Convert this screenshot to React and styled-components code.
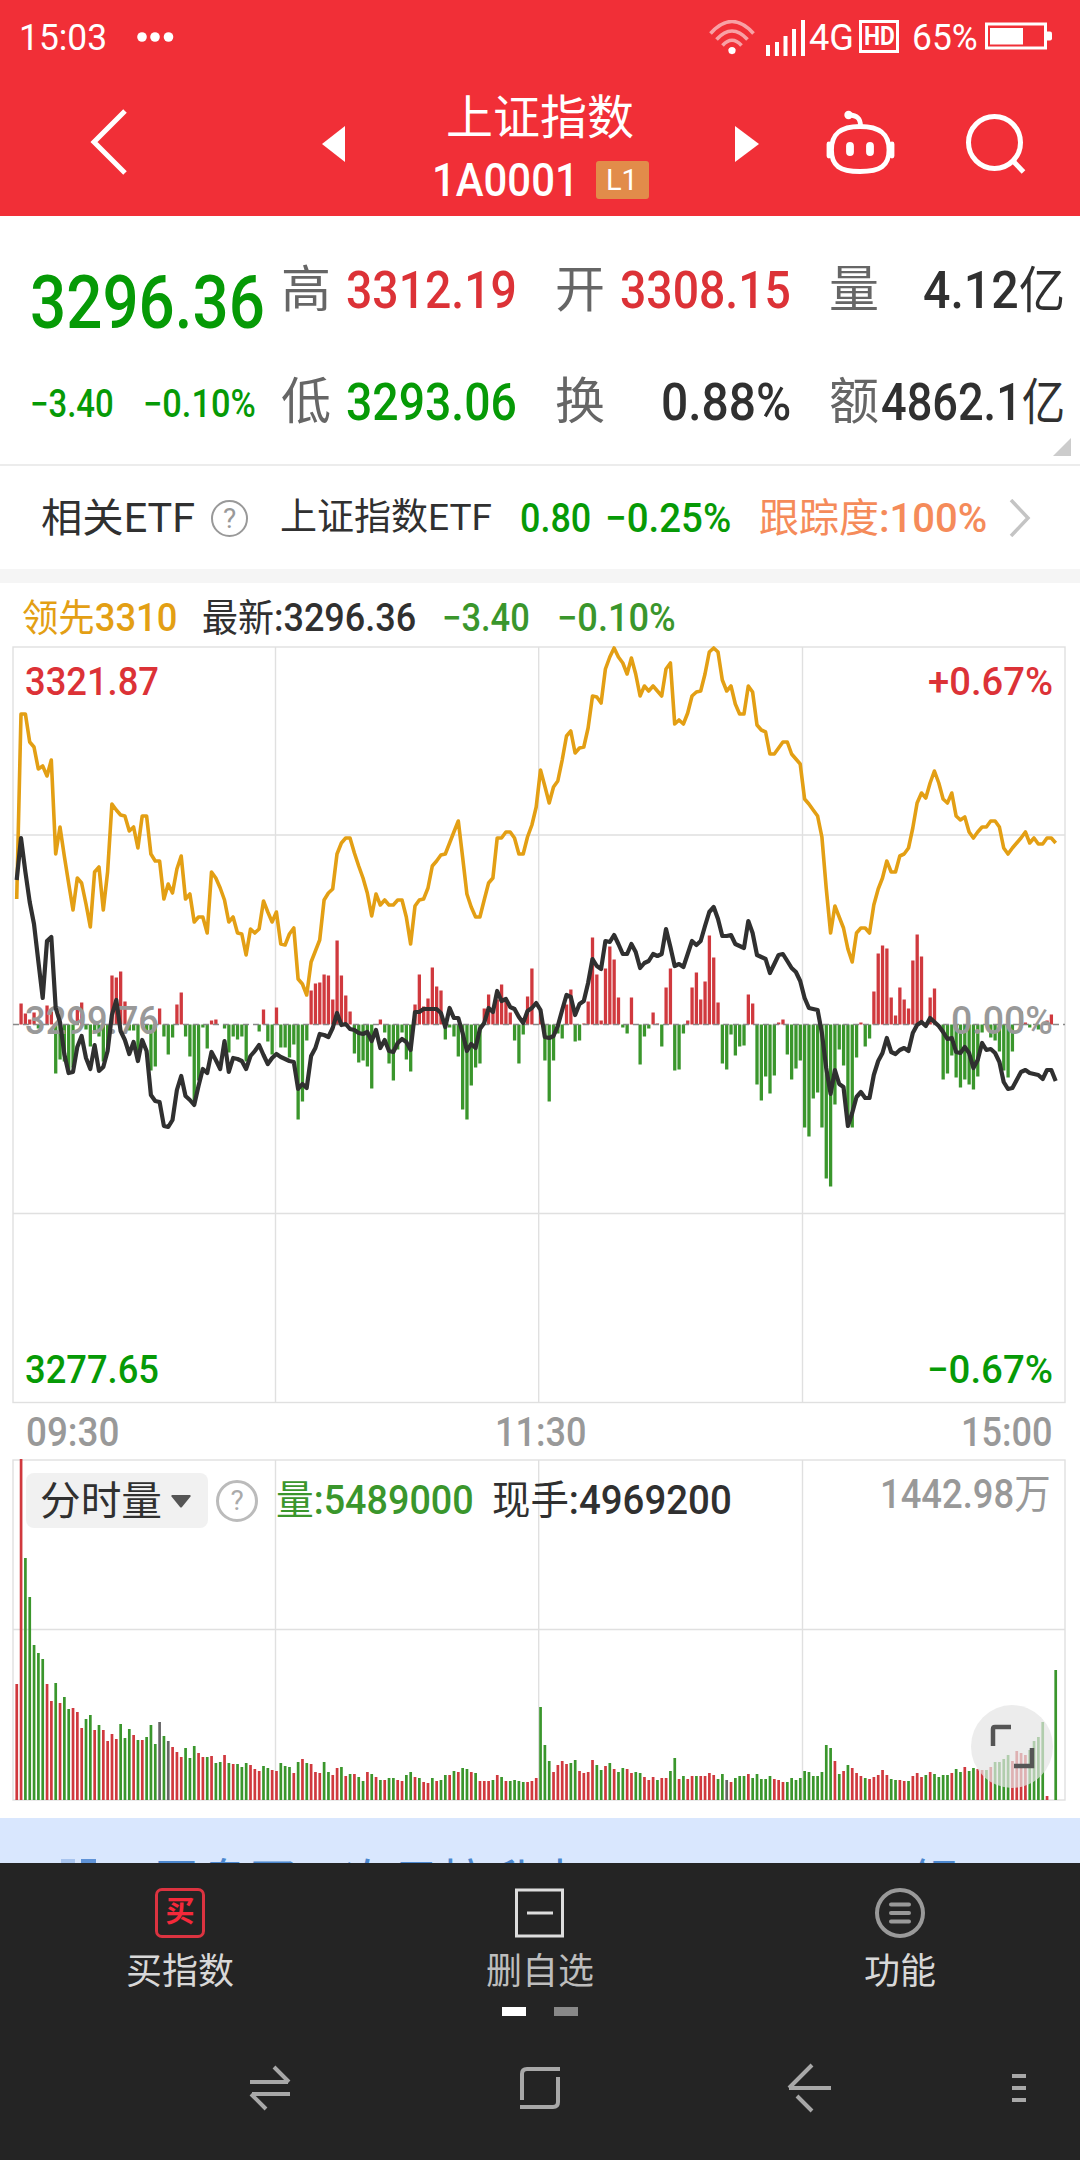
// src/App.jsx
import React, { useLayoutEffect, useRef, useState } from 'react';
import styled, { createGlobalStyle } from 'styled-components';

const RED = '#dc3237';
const GREEN = '#069a06';
const LINE_GREEN = '#3a962c';
const ORANGE = '#e39f14';
const DARK = '#303030';
const GREY = '#999';
const GRID = '#e0e0e0';

// One value per trading minute, in chart units
const leadLine = [
    899, 714, 714, 742, 747, 769, 766, 776, 760, 854, 827, 856, 883, 910, 878, 883, 904, 927, 872, 867,
    910, 872, 804, 810, 815, 816, 831, 827, 848, 816, 816, 854, 861, 861, 899, 884, 893, 869, 856, 899,
    894, 922, 917, 917, 933, 872, 878, 888, 900, 922, 917, 933, 934, 955, 929, 933, 929, 901, 912, 922,
    912, 944, 945, 934, 928, 979, 984, 995, 962, 951, 940, 900, 893, 889, 854, 843, 838, 838, 853, 866,
    878, 893, 916, 894, 905, 900, 905, 905, 900, 900, 917, 944, 906, 900, 899, 888, 866, 861, 855, 854,
    843, 832, 821, 857, 894, 907, 917, 917, 900, 883, 878, 838, 838, 832, 832, 838, 854, 854, 837, 825,
    807, 770, 786, 803, 787, 781, 760, 736, 731, 753, 748, 747, 728, 696, 697, 703, 669, 657, 648, 657,
    663, 674, 658, 674, 696, 686, 691, 686, 691, 696, 669, 663, 724, 720, 724, 713, 696, 692, 691, 674,
    652, 648, 652, 680, 691, 686, 704, 714, 714, 686, 692, 725, 730, 732, 754, 754, 748, 742, 742, 754,
    759, 764, 799, 804, 810, 816, 837, 888, 933, 906, 917, 928, 949, 962, 933, 928, 928, 933, 905, 889,
    878, 861, 872, 872, 856, 854, 848, 828, 803, 793, 798, 783, 771, 783, 799, 803, 793, 816, 820, 817,
    832, 838, 832, 827, 827, 821, 821, 827, 848, 854, 848, 843, 838, 832, 843, 838, 844, 844, 838, 838,
    843,
];

const indexLine = [
    880, 838, 872, 902, 924, 961, 998, 941, 937, 1008, 1022, 1054, 1073, 1072, 1047, 1036, 1058, 1069, 1045, 1071,
    1067, 1051, 1015, 1000, 1031, 1040, 1054, 1042, 1061, 1040, 1051, 1095, 1101, 1102, 1126, 1127, 1120, 1090, 1076, 1096,
    1100, 1105, 1086, 1069, 1073, 1052, 1060, 1069, 1041, 1072, 1058, 1059, 1061, 1069, 1056, 1051, 1045, 1055, 1064, 1058,
    1054, 1057, 1059, 1061, 1062, 1089, 1084, 1088, 1056, 1048, 1034, 1035, 1037, 1028, 1013, 1025, 1024, 1029, 1030, 1033,
    1034, 1032, 1041, 1030, 1048, 1040, 1051, 1052, 1043, 1039, 1042, 1050, 1012, 1012, 1009, 1009, 1009, 1009, 1013, 1027,
    1008, 1018, 1018, 1033, 1051, 1044, 1048, 1029, 1023, 1008, 1012, 991, 1001, 999, 1007, 1009, 1017, 1023, 1011, 1008,
    1003, 1010, 1037, 1038, 1036, 1026, 1010, 995, 997, 1015, 1004, 1001, 983, 959, 966, 969, 941, 942, 935, 944,
    954, 954, 944, 952, 968, 963, 961, 954, 956, 954, 929, 947, 966, 964, 967, 954, 941, 945, 941, 926,
    912, 907, 919, 936, 936, 935, 944, 946, 948, 921, 933, 955, 957, 959, 973, 964, 955, 954, 961, 968,
    972, 981, 998, 1008, 1009, 1010, 1033, 1068, 1094, 1070, 1084, 1087, 1126, 1113, 1097, 1092, 1098, 1098, 1075, 1061,
    1053, 1038, 1052, 1054, 1050, 1048, 1051, 1033, 1025, 1022, 1026, 1018, 1022, 1026, 1032, 1039, 1038, 1052, 1053, 1047,
    1053, 1068, 1060, 1043, 1050, 1049, 1053, 1062, 1082, 1089, 1088, 1080, 1072, 1070, 1073, 1074, 1075, 1079, 1070, 1070,
    1081,
];

// Above zero is drawn red, below zero green
const momentum = [
    0, 21, 11, 5, 12, -4, 0, 19, 13, -49, -35, -37, -46, -43, 15, 22, -5, -22, -8, -12,
    -37, -22, 49, 47, 53, 23, -6, -6, -33, 7, -8, -46, -42, 16, -12, -30, -13, 20, 32, -12,
    -32, -78, -56, -3, -24, 4, 5, 0, -4, -28, -12, -15, -12, -37, 0, 0, -7, 15, -17, -30,
    17, -23, -23, -33, -20, -95, -77, -16, 34, 41, 42, 50, 49, 25, 84, 49, 29, 13, -29, -38,
    -36, -42, -64, 0, 5, -8, -39, -56, -25, -8, -35, -47, 20, 50, 18, 26, 57, 38, 34, -15,
    -3, -12, -32, -85, -95, -61, -43, -39, 16, 30, 16, 25, 40, 25, 12, -16, -39, -10, 28, 56,
    0, 11, -36, -77, -36, -9, -14, 20, 35, -17, -16, 1, 23, 87, 50, 4, 56, 78, 65, 27,
    -3, -9, 27, 0, -40, -12, -4, 12, 1, -22, 37, 56, -46, -45, -9, 4, 37, 52, 25, 43,
    89, 67, 22, -39, -45, -10, -31, -22, -21, 30, 21, -60, -76, -52, -69, -51, 2, 5, -30, -55,
    -44, -36, -103, -112, -74, -68, -103, -154, -162, -80, -25, -41, -101, -103, -33, 2, -22, -14, 33, 71,
    79, 76, 27, 9, 37, 25, 16, 64, 90, 68, 0, 27, 36, 0, -55, -49, -31, -53, -63, -55,
    -60, -65, -52, -8, 0, -13, -16, -27, -46, -53, -27, 0, 13, 2, -3, 0, -5, 0, 4, 10,
    0,
];

// r = up, g = down, n = unchanged
const volume = `
r116 r341 g242 g203 g155 g147 g141 r116 r99 g117 r97 g103 g91 r92 r88 r72 g81 g85 r70 g75
r70 r59 r66 r61 g76 g62 g71 r65 g60 r60 g63 g75 g56 n78 g64 n59 r53 r48 r43 g52
g42 g54 r47 r43 g43 r44 g37 g38 r45 g37 r36 g36 g33 g37 r35 r31 r29 g34 g32 r30
r29 g37 g34 g33 r27 g38 r41 g37 r36 r28 r27 g38 g28 r25 r32 g33 r24 g26 r26 g23
g19 r28 g26 r23 g20 r20 g22 g22 r20 r19 g25 g28 r23 g22 r18 r17 g22 r19 g20 g25
r25 g29 r28 g32 g31 r28 g27 r19 r19 r19 g20 r25 g23 r19 g19 g20 g19 g18 r18 r19
r22 g93 g55 g39 r28 r35 r39 r36 g37 g40 r29 r27 r28 r40 g35 g30 r34 g37 r31 g28
g32 r31 r27 g28 g27 r23 r20 r23 g20 r22 r22 g29 g42 r21 g24 r21 r24 g24 r24 r24
r27 r25 g21 g26 n20 r18 g22 g24 g24 r26 g22 g26 g21 g21 g24 r21 r20 r18 g18 g22
g20 g22 g29 g28 g24 g24 g28 g55 g52 r39 g26 r29 g35 r32 r27 r24 g22 r21 r23 r25
r30 r25 g21 g20 r20 r19 g19 r24 r27 r23 g25 r28 g26 g23 g25 g25 r27 g31 g28 r33
g29 g32 r31 r30 g30 r33 g38 g38 g41 g45 r39 r49 r47 r45 g50 g59 g63 g78 r4 g0
g130
`.trim().split(/\s+/).map((t) => ({ kind: t[0], h: Number(t.slice(1)) }));

const volumeColors = { r: '#d0393e', g: LINE_GREEN, n: '#666' };
const minuteX = (i) => 16.7 + i * 4.329;
const toPoints = (values) => values.map((y, i) => `${minuteX(i).toFixed(1)},${y}`).join(' ');

const GlobalStyle = createGlobalStyle`
    * {
        box-sizing: border-box;
    }

    body {
        margin: 0;
        background: #fff;
        font-family: Roboto, "Noto Sans CJK SC", sans-serif;
        color: ${DARK};
    }

    svg {
        display: block;
        flex: none;
    }
`;

const Screen = styled.div`
    width: 1080px;
    height: 2160px;
    display: flex;
    flex-direction: column;
    overflow: hidden;
    background: #fff;
`;

/* Text squeezed to a fixed width, the way the condensed figures are set */
const FitBox = styled.span`
    display: inline-block;
    flex: none;
    width: ${(p) => p.$width}px;
    margin-left: ${(p) => p.$gap || 0}px;
    font-size: ${(p) => p.$size}px;
    font-weight: ${(p) => p.$weight || 500};
    line-height: 1.2;
    color: ${(p) => p.$color || 'inherit'};
    white-space: nowrap;
`;

const FitInner = styled.span`
    display: inline-block;
    transform-origin: 0 50%;
`;

function Fit({ width, size, weight, color, gap, children }) {
    const ref = useRef(null);
    const [scale, setScale] = useState(1);
    useLayoutEffect(() => {
        setScale(width / ref.current.offsetWidth);
    }, [width]);
    return (
        <FitBox $width={width} $size={size} $weight={weight} $color={color} $gap={gap}>
            <FitInner ref={ref} style={{ transform: `scaleX(${scale})` }}>{children}</FitInner>
        </FitBox>
    );
}

const Han = styled.span`
    font-weight: 400;
    font-size: ${(p) => (p.$size ? `${p.$size}px` : 'inherit')};
    line-height: 1;
`;

// Header
const Header = styled.header`
    height: 216px;
    flex: none;
    background: #f12f37;
    color: #fff;
`;

const StatusBar = styled.div`
    height: 76px;
    display: flex;
    align-items: center;
    justify-content: space-between;
    padding: 0 27px 0 19px;
`;

const StatusGroup = styled.div`
    display: flex;
    align-items: center;
`;

const WifiSvg = styled.svg`
    margin-right: 11px;
`;

const DotsSvg = styled.svg`
    margin-left: 28px;
`;

const BatterySvg = styled.svg`
    margin: -4px 0 0 7px;
`;

const HdBadge = styled.span`
    width: 40px;
    height: 33px;
    margin: -2px 0 0 5px;
    border: 3px solid #fff;
    display: flex;
    align-items: center;
    justify-content: center;
`;

const TitleBar = styled.div`
    height: 140px;
    display: grid;
    grid-template-columns: 322px 110px 216px 111px 68px 102px 151px;
`;

const TitleText = styled.div`
    display: flex;
    flex-direction: column;
    align-items: center;
    padding-top: 12px;
`;

const Name = styled.div`
    font-size: 47px;
    line-height: 60px;
    white-space: nowrap;
`;

const CodeRow = styled.div`
    height: 64px;
    display: flex;
    align-items: center;
`;

const LevelBadge = styled.span`
    width: 53px;
    height: 38px;
    margin-left: 17px;
    border-radius: 3px;
    background: #e28c4a;
    display: flex;
    align-items: center;
    justify-content: center;
`;

const BarIcon = styled.svg`
    width: ${(p) => p.$width}px;
    height: 140px;
    margin-left: ${(p) => p.$shift || 0}px;
    justify-self: ${(p) => p.$align || 'start'};
`;

// Quote
const Quote = styled.section`
    position: relative;
    height: 250px;
    flex: none;
    display: grid;
    grid-template-columns: 213px repeat(3, 236px);
    grid-template-rows: 112px 112px;
    column-gap: 38px;
    padding: 19px 0 0 30px;
    border-bottom: 2px solid #ececec;
`;

const LastPrice = styled.div`
    display: flex;
    align-items: center;
    padding-top: ${(p) => p.$drop}px;
`;

const Stat = styled.div`
    display: flex;
    align-items: center;
    justify-content: space-between;
`;

const StatLabel = styled.span`
    font-size: 50px;
    line-height: 60px;
    margin-top: -2px;
    color: #666;
`;

const Corner = styled.svg`
    position: absolute;
    right: 9px;
    bottom: 8px;
`;

// Related ETF and legend
const EtfRow = styled.section`
    height: 103px;
    flex: none;
    display: flex;
    align-items: center;
    padding: 2px 0 0 41px;
`;

const Chevron = styled.svg`
    margin: -2px 0 0 21px;
`;

const HelpIcon = styled.span`
    width: ${(p) => p.$d}px;
    height: ${(p) => p.$d}px;
    flex: none;
    margin-left: ${(p) => p.$gap}px;
    border: ${(p) => p.$line}px solid ${(p) => p.$color};
    border-radius: 50%;
    display: flex;
    align-items: center;
    justify-content: center;
    font-size: 28px;
    line-height: 1;
    color: ${(p) => p.$text};
`;

const Divider = styled.div`
    height: 14px;
    flex: none;
    background: #f5f5f5;
`;

const Legend = styled.div`
    height: 63px;
    flex: none;
    display: flex;
    align-items: center;
    padding: 8px 0 0 22px;
`;

const ChartSvg = styled.svg`
    width: 1080px;
    height: ${(p) => p.$height}px;
`;

const ChartText = styled.text`
    font-size: 39px;
    font-weight: 500;
    fill: ${(p) => p.$fill};
`;

const TimeAxis = styled.div`
    height: 55px;
    flex: none;
    display: flex;
    align-items: center;
    justify-content: space-between;
    padding: 2px 28px 0 26px;
`;

const VolumePane = styled.section`
    position: relative;
    height: 359px;
    flex: none;
`;

const VolumeBar = styled.div`
    position: absolute;
    top: 14px;
    left: 26px;
    right: 29px;
    height: 55px;
    display: flex;
    align-items: center;
`;

const VolumeSelect = styled.div`
    width: 182px;
    height: 55px;
    border-radius: 8px;
    background: #f1f1f1;
    display: flex;
    align-items: center;
    gap: 9px;
    padding: 2px 0 0 14px;
`;

const VolumeMax = styled.div`
    margin: -12px 0 0 auto;
`;

const Expand = styled.button`
    position: absolute;
    left: 971px;
    top: 246px;
    width: 82px;
    height: 83px;
    padding: 0;
    border: none;
    border-radius: 50%;
    background: rgba(228, 228, 228, 0.7);
`;

// Bottom
const Promo = styled.div`
    height: 45px;
    flex: none;
    overflow: hidden;
    background: #d9e7fe;
    display: flex;
    align-items: flex-start;
    padding: 38px 0 0 61px;
    color: #4b87cf;
    font-size: 48px;
    line-height: 54px;
    white-space: nowrap;
`;

const PromoMark = styled.span`
    width: ${(p) => p.$width}px;
    height: 20px;
    flex: none;
    margin: 3px 6px 0 0;
    background: ${(p) => p.$color};
`;

const PromoText = styled.span`
    margin-left: ${(p) => p.$gap}px;
`;

const Footer = styled.footer`
    flex: 1;
    background: #242424;
`;

const Tabs = styled.nav`
    display: grid;
    grid-template-columns: repeat(3, 360px);
    height: 144px;
`;

const Tab = styled.div`
    display: flex;
    flex-direction: column;
    align-items: center;
    padding-top: 25px;
    font-size: 36px;
    line-height: 44px;
    color: ${(p) => p.$color};

    svg, div {
        margin-bottom: 12px;
    }
`;

const BuyIcon = styled.div`
    width: 50px;
    height: 50px;
    border: 3px solid #dc3340;
    border-radius: 7px;
    color: #f5293a;
    font-size: 29px;
    font-weight: 700;
    line-height: 43px;
    text-align: center;
`;

const Pager = styled.div`
    display: flex;
    justify-content: center;
    gap: 28px;
    height: 9px;
`;

const PagerDot = styled.span`
    width: 24px;
    background: ${(p) => (p.$active ? '#fff' : '#888')};
`;

const SystemNav = styled.div`
    height: 144px;
    display: grid;
    grid-template-columns: 405px 270px 268px 152px;
    justify-items: center;
    align-items: center;
`;

const NavSvg = styled.svg`
    fill: none;
    stroke: #a8a8a8;
    stroke-width: 4;
    margin-left: ${(p) => p.$shift || 0}px;
`;

function WifiIcon() {
    return (
        <WifiSvg width="46" height="36" viewBox="0 0 46 36" fill="none" stroke="#fff" strokeWidth="3.6">
            <g opacity="0.55">
                <path d="M1.5 13.5Q23-10.5 44.5 13.5" />
                <path d="M7.5 19.5Q23 2.5 38.5 19.5" />
                <path d="M13.5 25.5Q23 15 32.5 25.5" />
            </g>
            <path d="M19.5 29.5Q23 26 26.5 29.5L23 34.5Z" fill="#fff" stroke="none" />
            <circle cx="23" cy="30.5" r="3.6" fill="#fff" stroke="none" />
        </WifiSvg>
    );
}

function StatusRow() {
    return (
        <StatusBar>
            <StatusGroup>
                <Fit width={88} size={37} weight={400}>15:03</Fit>
                <DotsSvg width="40" height="12" viewBox="0 0 40 12" fill="#fff">
                    <circle cx="7" cy="5" r="4.8" />
                    <circle cx="20" cy="5" r="4.8" />
                    <circle cx="33.5" cy="5" r="4.8" />
                </DotsSvg>
            </StatusGroup>
            <StatusGroup>
                <WifiIcon />
                <svg width="40" height="36" viewBox="0 0 40 36" fill="#fff">
                    <path d="M0 25h4v11h-4zM9 22h4v14h-4zM17.5 16h4v20h-4zM26 9h4v27h-4zM35 0h4v36h-4z" />
                </svg>
                <Fit width={45} size={37} weight={400} gap={3}>4G</Fit>
                <HdBadge><Fit width={31} size={25} weight={700}>HD</Fit></HdBadge>
                <Fit width={66} size={37} weight={400} gap={13}>65%</Fit>
                <BatterySvg width="68" height="28" viewBox="0 0 68 28">
                    <rect x="1.5" y="2" width="59" height="24" fill="none" stroke="#fff" strokeWidth="3" />
                    <rect x="5" y="6" width="33" height="16.5" fill="#fff" />
                    <path d="M62 9.5h3q2 0 2 2v5q0 2-2 2h-3z" fill="#fff" />
                </BatterySvg>
            </StatusGroup>
        </StatusBar>
    );
}

function TitleRow() {
    return (
        <TitleBar>
            <BarIcon $width={322} viewBox="0 0 322 140" fill="none" stroke="#fff" strokeWidth="5">
                <path d="M125 35L94 66L125 97" />
            </BarIcon>
            <BarIcon $width={110} viewBox="0 0 110 140" fill="#fff">
                <path d="M23 50V86L0 68Z" />
            </BarIcon>
            <TitleText>
                <Name>上证指数</Name>
                <CodeRow>
                    <Fit width={147} size={47}>1A0001</Fit>
                    <LevelBadge><Fit width={32} size={29} weight={400}>L1</Fit></LevelBadge>
                </CodeRow>
            </TitleText>
            <BarIcon $width={24} $align="end" viewBox="0 0 24 140" fill="#fff">
                <path d="M0 50V86L24 68Z" />
            </BarIcon>
            <BarIcon $width={136} $shift={67} viewBox="0 0 136 140" fill="none" stroke="#fff" strokeWidth="4.8">
                <path d="M5.500 74C5.500 58 14 50.500 34 50.500S63 58 63 74S54 95.500 34 95.500S5.500 90 5.500 74Z" />
                <path d="M34.500 50C34.500 42 31 39.500 23 39" />
                <circle cx="22.500" cy="39" r="4.200" fill="#fff" stroke="none" />
                <path d="M24 70v6M44 70v6" strokeWidth="7.800" strokeLinecap="round" />
                <path d="M3 68v12M66 68v12" strokeLinecap="round" />
            </BarIcon>
            <BarIcon $width={151} $shift={104} viewBox="0 0 151 140" fill="none" stroke="#fff" strokeWidth="5">
                <circle cx="63.500" cy="66.500" r="26" />
                <path d="M82 85L92.500 96" />
            </BarIcon>
        </TitleBar>
    );
}

function PriceChart() {
    return (
        <ChartSvg $height={758} viewBox="0 646 1080 758">
            <g fill="none" stroke={GRID} strokeWidth="1.4">
                <rect x="13" y="647" width="1052" height="755.5" />
                <path d="M275.5 647V1402M538.7 647V1402M802.5 647V1402M13 835H1065M13 1213.5H1065" />
            </g>
            {momentum.map((v, i) => v !== 0 && (
                <rect
                    key={i}
                    x={minuteX(i) - 1.6}
                    y={v > 0 ? 1024.5 - v : 1024.5}
                    width="3.3"
                    height={Math.abs(v)}
                    fill={v > 0 ? '#d0393e' : LINE_GREEN}
                />
            ))}
            <path d="M13 1024.5H1065" stroke="#888" strokeWidth="1.3" strokeDasharray="6 4" />
            <ChartText x="25" y="695" textLength="134" lengthAdjust="spacingAndGlyphs" $fill={RED}>3321.87</ChartText>
            <ChartText x="928" y="695" textLength="125" lengthAdjust="spacingAndGlyphs" $fill={RED}>+0.67%</ChartText>
            <ChartText x="25" y="1033.5" textLength="134" lengthAdjust="spacingAndGlyphs" $fill={GREY}>3299.76</ChartText>
            <ChartText x="951" y="1033.5" textLength="102" lengthAdjust="spacingAndGlyphs" $fill={GREY}>0.00%</ChartText>
            <ChartText x="25" y="1383" textLength="134" lengthAdjust="spacingAndGlyphs" $fill={GREEN}>3277.65</ChartText>
            <ChartText x="927" y="1383" textLength="126" lengthAdjust="spacingAndGlyphs" $fill={GREEN}>−0.67%</ChartText>
            <polyline points={toPoints(leadLine)} fill="none" stroke={ORANGE} strokeWidth="3.6" strokeLinejoin="round" />
            <polyline points={toPoints(indexLine)} fill="none" stroke={DARK} strokeWidth="4.2" strokeLinejoin="round" />
        </ChartSvg>
    );
}

function VolumeChart() {
    return (
        <ChartSvg $height={342} viewBox="0 0 1080 342">
            <g fill="none" stroke={GRID} strokeWidth="1.4">
                <rect x="13" y="1" width="1052" height="340" />
                <path d="M275.5 1V341M538.7 1V341M802.5 1V341M13 170.5H1065" />
            </g>
            {volume.map((v, i) => (
                <rect key={i} x={minuteX(i) - 1.3} y={341 - v.h} width="2.7" height={v.h} fill={volumeColors[v.kind]} />
            ))}
        </ChartSvg>
    );
}

function App() {
    return (
        <Screen>
            <GlobalStyle />
            <Header>
                <StatusRow />
                <TitleRow />
            </Header>

            <Quote>
                <LastPrice $drop={24}><Fit width={235} size={74} color={GREEN}>3296.36</Fit></LastPrice>
                <Stat>
                    <StatLabel>高</StatLabel>
                    <Fit width={171} size={52} color={RED}>3312.19</Fit>
                </Stat>
                <Stat>
                    <StatLabel>开</StatLabel>
                    <Fit width={171} size={52} color={RED}>3308.15</Fit>
                </Stat>
                <Stat>
                    <StatLabel>量</StatLabel>
                    <Fit width={142} size={52}>4.12<Han $size={50}>亿</Han></Fit>
                </Stat>
                <LastPrice $drop={4}>
                    <Fit width={84} size={38} color={GREEN}>−3.40</Fit>
                    <Fit width={113} size={38} color={GREEN} gap={29}>−0.10%</Fit>
                </LastPrice>
                <Stat>
                    <StatLabel>低</StatLabel>
                    <Fit width={171} size={52} color={GREEN}>3293.06</Fit>
                </Stat>
                <Stat>
                    <StatLabel>换</StatLabel>
                    <Fit width={130} size={52}>0.88%</Fit>
                </Stat>
                <Stat>
                    <StatLabel>额</StatLabel>
                    <Fit width={184} size={52}>4862.1<Han $size={50}>亿</Han></Fit>
                </Stat>
                <Corner width="18" height="18" viewBox="0 0 18 18"><path d="M18 0V18H0Z" fill="#ccc" /></Corner>
            </Quote>

            <EtfRow>
                <Fit width={154} size={40} weight={400}>相关ETF</Fit>
                <HelpIcon $d={37} $gap={16} $line={2} $color="#999" $text="#999">?</HelpIcon>
                <Fit width={212} size={37} weight={400} gap={32}>上证指数ETF</Fit>
                <Fit width={71} size={40} color={GREEN} gap={28}>0.80</Fit>
                <Fit width={126} size={40} color={GREEN} gap={14}>−0.25%</Fit>
                <Fit width={228} size={40} color="#f58b5a" gap={28}><Han>跟踪度</Han>:100%</Fit>
                <Chevron width="24" height="38" viewBox="0 0 24 38" fill="none" stroke="#c4c4c4" strokeWidth="3.5">
                    <path d="M3 1L20 19L3 37" />
                </Chevron>
            </EtfRow>
            <Divider />

            <Legend>
                <Fit width={155} size={38} color={ORANGE}><Han>领先</Han>3310</Fit>
                <Fit width={214} size={38} gap={25}><Han>最新</Han>:3296.36</Fit>
                <Fit width={88} size={38} color={LINE_GREEN} gap={26}>−3.40</Fit>
                <Fit width={119} size={38} color={LINE_GREEN} gap={27}>−0.10%</Fit>
            </Legend>
            <PriceChart />
            <TimeAxis>
                <Fit width={93} size={40} color={GREY}>09:30</Fit>
                <Fit width={91} size={40} color={GREY}>11:30</Fit>
                <Fit width={91} size={40} color={GREY}>15:00</Fit>
            </TimeAxis>
            <VolumePane>
                <VolumeChart />
                <VolumeBar>
                    <VolumeSelect>
                        <Fit width={122} size={40} weight={400}>分时量</Fit>
                        <svg width="20" height="13" viewBox="0 0 20 13">
                            <path d="M1 0H19Q20 0 19.5 1.5L11 12Q10 13 9 12L0.5 1.5Q0 0 1 0Z" fill="#555" />
                        </svg>
                    </VolumeSelect>
                    <HelpIcon $d={42} $gap={8} $line={3} $color="#bbb" $text="#aaa">?</HelpIcon>
                    <Fit width={198} size={40} color={LINE_GREEN} gap={18}><Han>量</Han>:5489000</Fit>
                    <Fit width={240} size={40} gap={18}><Han>现手</Han>:4969200</Fit>
                    <VolumeMax><Fit width={171} size={40} color={GREY}>1442.98<Han>万</Han></Fit></VolumeMax>
                </VolumeBar>
                <Expand>
                    <svg width="82" height="83" viewBox="0 0 82 83" fill="none" stroke="#555" strokeWidth="4.5">
                        <path d="M22 41V24Q22 22 24 22H40M43 61H61V43" />
                    </svg>
                </Expand>
            </VolumePane>

            <Promo>
                <PromoMark $width={14} $color="#a9c5ef" />
                <PromoMark $width={15} $color="#5f93d8" />
                <PromoText $gap={50}>尾盘买，次日拉升中</PromoText>
                <PromoText $gap={325}>领</PromoText>
            </Promo>

            <Footer>
                <Tabs>
                    <Tab $color="#d8d8d8">
                        <BuyIcon>买</BuyIcon>
                        买指数
                    </Tab>
                    <Tab $color="#bdbdbd">
                        <svg width="50" height="50" viewBox="0 0 50 50" fill="none" stroke="#ddd" strokeWidth="3">
                            <rect x="1.5" y="2" width="46" height="46" />
                            <path d="M12 25H38" />
                        </svg>
                        删自选
                    </Tab>
                    <Tab $color="#d8d8d8">
                        <svg width="52" height="50" viewBox="0 0 52 50" fill="none" stroke="#999" strokeWidth="4">
                            <circle cx="26" cy="25" r="23" />
                            <path d="M17 16.5H35M17 25H35M17 33.5H35" strokeLinecap="round" />
                        </svg>
                        功能
                    </Tab>
                </Tabs>
                <Pager>
                    <PagerDot $active />
                    <PagerDot />
                </Pager>
                <SystemNav>
                    <NavSvg width="42" height="46" viewBox="0 0 42 46" $shift={135}>
                        <path d="M1 17H39M25 2L40 17M41 29H3M2 29L17 44" />
                    </NavSvg>
                    <NavSvg width="42" height="44" viewBox="0 0 42 44">
                        <path d="M3 34V8Q3 3 8 3H41M39 11V36Q39 41 34 41H1" />
                    </NavSvg>
                    <NavSvg width="44" height="50" viewBox="0 0 44 50">
                        <path d="M44 25H2M25 2L2 25M10 33L25 48" />
                    </NavSvg>
                    <NavSvg width="16" height="30" viewBox="0 0 16 30">
                        <path d="M1 3H15M1 15H15M1 27H15" />
                    </NavSvg>
                </SystemNav>
            </Footer>
        </Screen>
    );
}

export default App;
